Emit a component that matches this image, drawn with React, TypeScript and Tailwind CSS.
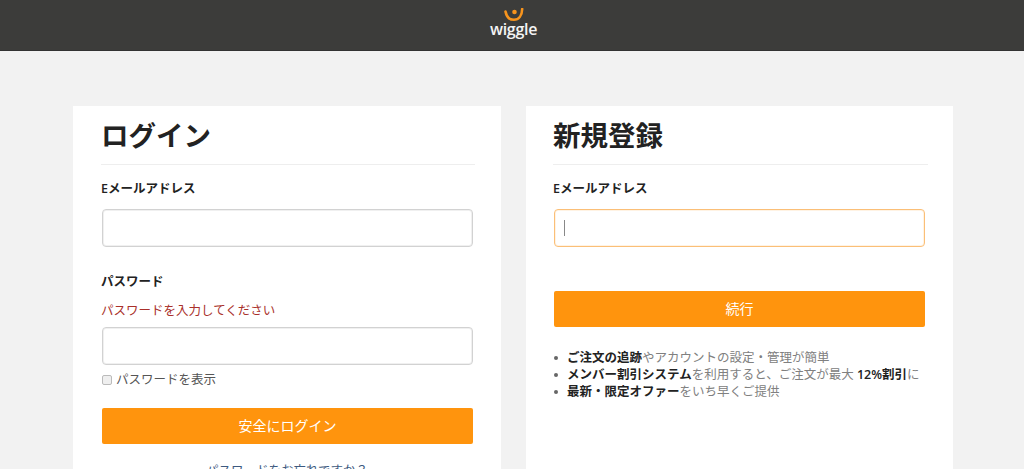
import React from 'react';

const font = { fontFamily: '"Open Sans", "Noto Sans CJK JP", sans-serif' };

const Logo: React.FC = () => (
  <div className="flex flex-col items-center">
    <svg className="w-[20px] h-[14px] -mb-[1px]" viewBox="0 0 20 14" fill="none">
      <path d="M1.5 3.5C2.5 9 6 11.8 10 11.8C14.5 11.8 18 8 18.2 1" stroke="#f7941d" strokeWidth="2.6" strokeLinecap="round" />
      <circle cx="10.5" cy="4" r="2.3" fill="#f7941d" />
    </svg>
    <span className="text-[16px] leading-[17px] font-semibold text-[#f4f4f4] tracking-[-0.3px]">wiggle</span>
  </div>
);

const Heading: React.FC<{ text: string }> = ({ text }) => (
  <div className="border-b border-[#eeeeee] mr-[-2px] h-[59px]">
    <h1 className="text-[27.5px] leading-[60px] font-bold text-[#222222]">{text}</h1>
  </div>
);

const Bullet: React.FC<{ children: React.ReactNode }> = ({ children }) => (
  <li className="flex items-center whitespace-nowrap">
    <span className="w-[4px] h-[4px] mr-[9px] rounded-full bg-[#666666]" />
    <span>{children}</span>
  </li>
);

export default function App() {
  return (
    <div className="h-[469px] overflow-hidden bg-[#f2f2f2]" style={font}>
      <header className="h-[51px] bg-[#3c3c3a] border-b border-[#333333] flex justify-center items-start pt-[8px] pl-[3px]">
        <Logo />
      </header>

      <main className="flex gap-[25px] pl-[73px] pt-[55px]">
        {/* Login */}
        <section className="w-[428px] h-[400px] bg-white px-[28px]">
          <Heading text="ログイン" />
          <label className="block mt-[14px] text-[12.5px] leading-[20px] font-semibold text-[#222222]">Eメールアドレス</label>
          <input className="block mt-[10px] ml-[1px] w-[371px] h-[38px] bg-white border border-[#d2d2d2] shadow-[inset_0_0_0_1px_#f0f0f0] rounded-[4px] outline-none" />

          <label className="block mt-[25px] text-[12.5px] leading-[20px] font-semibold text-[#222222]">パスワード</label>
          <p className="mt-[9px] text-[12.5px] leading-[20px] text-[#a9302a]">パスワードを入力してください</p>
          <input type="password" className="block mt-[6px] ml-[1px] w-[371px] h-[38px] bg-white border border-[#d2d2d2] shadow-[inset_0_0_0_1px_#f0f0f0] rounded-[4px] outline-none" />
          <div className="flex items-center mt-[5px] ml-[1px] h-[20px]">
            <span className="w-[10px] h-[10px] bg-[#efefef] border border-[#bbbbbb] rounded-[2px]" />
            <span className="ml-[4px] text-[12.5px] text-[#555555]">パスワードを表示</span>
          </div>
          <button className="block mt-[18px] ml-[1px] w-[371px] h-[36px] pb-[2px] bg-[#ff940d] rounded-[2px] text-[14px] text-white">安全にログイン</button>
          <p className="mt-[17px] text-center text-[12.5px] leading-[20px] text-[#3d5a80]">パスワードをお忘れですか？</p>
        </section>

        {/* Register */}
        <section className="w-[427px] h-[400px] bg-white px-[27px]">
          <Heading text="新規登録" />
          <label className="block mt-[14px] text-[12.5px] leading-[20px] font-semibold text-[#222222]">Eメールアドレス</label>
          <div className="relative mt-[10px] ml-[1px] w-[371px]">
            <input className="block w-full h-[38px] bg-white border border-[#fbbf77] shadow-[inset_0_0_0_1px_#fff3e4] rounded-[4px] outline-none" />
            <span className="absolute left-[10px] top-[11px] w-[1px] h-[16px] bg-[#888888]" />
          </div>
          <button className="block mt-[44px] ml-[1px] w-[371px] h-[36px] pb-[2px] bg-[#ff940d] rounded-[2px] text-[14px] text-white">続行</button>
          <ul className="mt-[22px] ml-[1px] text-[12.5px] leading-[17px] text-[#808080]">
            <Bullet><b className="font-semibold text-[#222222]">ご注文の追跡</b>やアカウントの設定・管理が簡単</Bullet>
            <Bullet><b className="font-semibold text-[#222222]">メンバー割引システム</b>を利用すると、ご注文が最大 <b className="font-semibold text-[#222222]">12%割引</b>に</Bullet>
            <Bullet><b className="font-semibold text-[#222222]">最新・限定オファー</b>をいち早くご提供</Bullet>
          </ul>
        </section>
      </main>
    </div>
  );
}
